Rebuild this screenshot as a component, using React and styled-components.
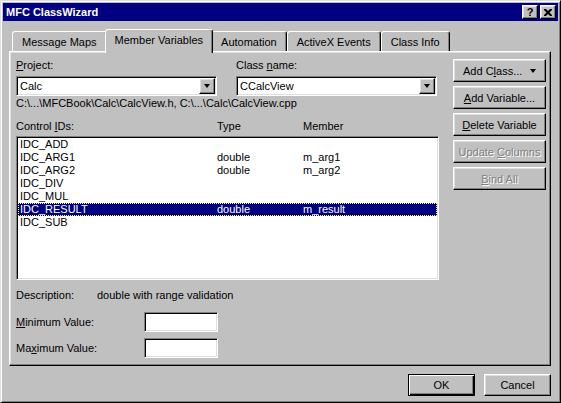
import React from "react";
import styled, { createGlobalStyle, css } from "styled-components";

const GlobalStyle = createGlobalStyle`
  html, body {
    margin: 0;
    padding: 0;
    background: #c0c0c0;
  }
  body {
    font-family: "Liberation Sans", Arial, sans-serif;
    font-size: 11px;
    color: #000;
  }
  * {
    box-sizing: border-box;
  }
`;

const raised = css`
  border: 1px solid;
  border-color: #fff #000 #000 #fff;
  box-shadow: inset -1px -1px #808080, inset 1px 1px #dfdfdf;
`;

const sunken = css`
  border: 1px solid;
  border-color: #808080 #fff #fff #808080;
  box-shadow: inset 1px 1px #000, inset -1px -1px #dfdfdf;
  background: #fff;
`;

const Window = styled.div`
  width: 561px;
  height: 403px;
  padding: 2px;
  display: flex;
  flex-direction: column;
  background: #c0c0c0;
  border: 1px solid;
  border-color: #dfdfdf #000 #000 #dfdfdf;
  box-shadow: inset 1px 1px #fff, inset -1px -1px #808080;
`;

const TitleBar = styled.div`
  height: 18px;
  flex: 0 0 auto;
  display: flex;
  align-items: center;
  padding: 0 2px 0 3px;
  background: #000080;
  color: #fff;
  font-weight: bold;
  > span {
    flex: 1 0 auto;
  }
`;

const TitleButton = styled.div`
  ${raised};
  width: 16px;
  height: 14px;
  margin-left: ${(p) => (p.$gap ? "2px" : "0")};
  background: #c0c0c0;
  color: #000;
  display: flex;
  align-items: center;
  justify-content: center;
  font-size: 11px;
  font-weight: bold;
  line-height: 12px;
`;

const Body = styled.div`
  flex: 1 0 auto;
  display: flex;
  flex-direction: column;
  padding: 8px 7px 4px 6px;
`;

const TabStrip = styled.div`
  height: 22px;
  display: flex;
  align-items: flex-end;
  padding-left: 3px;
`;

const Tab = styled.div`
  height: ${(p) => (p.$active ? "24px" : "20px")};
  margin: ${(p) => (p.$active ? "0 -2px -2px -2px" : "0")};
  position: relative;
  z-index: ${(p) => (p.$active ? 1 : 0)};
  padding: 0 9px;
  display: flex;
  align-items: center;
  padding-bottom: ${(p) => (p.$active ? "3px" : "0")};
  background: #c0c0c0;
  border-top: 1px solid #fff;
  border-left: 1px solid #fff;
  border-right: 1px solid #000;
  border-radius: 3px 3px 0 0;
  box-shadow: inset -1px 0 #808080;
  white-space: nowrap;
`;

const Panel = styled.div`
  flex: 1 0 auto;
  display: flex;
  gap: 14px;
  padding: 7px 4px 0 6px;
  border: 1px solid;
  border-color: #fff #000 #000 #fff;
  box-shadow: inset -1px -1px #808080, inset 1px 1px #dfdfdf;
`;

const LeftColumn = styled.div`
  width: 423px;
  display: flex;
  flex-direction: column;
`;

const FieldRow = styled.div`
  display: grid;
  grid-template-columns: 201px 201px;
  column-gap: 19px;
`;

const Field = styled.div`
  display: flex;
  flex-direction: column;
`;

const Label = styled.div`
  height: 13px;
  line-height: 13px;
  margin-bottom: 4px;
`;

const Key = styled.span`
  text-decoration: underline;
  text-underline-offset: 1px;
`;

const Combo = styled.div`
  ${sunken};
  height: 20px;
  padding: 1px;
  display: flex;
  align-items: center;
  > span {
    flex: 1 0 auto;
    padding-left: 2px;
    line-height: 16px;
  }
`;

const ComboButton = styled.div`
  ${raised};
  width: 16px;
  height: 16px;
  background: #c0c0c0;
  display: flex;
  align-items: center;
  justify-content: center;
`;

const Arrow = styled.span`
  width: 0;
  height: 0;
  border-left: 3.5px solid transparent;
  border-right: 3.5px solid transparent;
  border-top: 4px solid #000;
`;

const PathText = styled.div`
  margin-top: 1px;
  line-height: 13px;
  white-space: nowrap;
`;

const ColumnHeader = styled.div`
  margin-top: 10px;
  line-height: 13px;
  display: grid;
  grid-template-columns: 201px 86px 1fr;
`;

const ListBox = styled.div`
  ${sunken};
  margin-top: 3px;
  height: 144px;
  padding: 1px;
`;

const ListRow = styled.div`
  height: 13px;
  line-height: 13px;
  padding-left: 2px;
  display: grid;
  grid-template-columns: 197px 86px 1fr;
  white-space: nowrap;
  ${(p) =>
    p.$selected &&
    css`
      background: #000080;
      color: #fff;
      outline: 1px dotted #ffff60;
      outline-offset: -1px;
    `}
`;

const DescRow = styled.div`
  margin-top: 9px;
  line-height: 13px;
  display: flex;
  > span:first-child {
    width: 81px;
  }
`;

const ValueRow = styled.div`
  margin-top: ${(p) => p.$top}px;
  display: flex;
  align-items: center;
  > span {
    width: 128px;
  }
`;

const ValueInput = styled.div`
  ${sunken};
  width: 74px;
  height: 20px;
`;

const ButtonColumn = styled.div`
  width: 93px;
  display: flex;
  flex-direction: column;
  gap: 4px;
`;

const Button = styled.div`
  ${raised};
  height: ${(p) => p.$h || 23}px;
  width: ${(p) => (p.$w ? `${p.$w}px` : "auto")};
  background: #c0c0c0;
  display: flex;
  align-items: center;
  justify-content: ${(p) => (p.$menu ? "space-between" : "center")};
  padding: ${(p) => (p.$menu ? "0 9px 0 9px" : "0")};
  white-space: nowrap;
  ${(p) =>
    p.$disabled &&
    css`
      color: #808080;
      text-shadow: 1px 1px #fff;
    `}
  ${(p) =>
    p.$default &&
    css`
      border: 1px solid #000;
      box-shadow: inset 1px 1px #fff, inset -1px -1px #000,
        inset -2px -2px #808080;
    `}
`;

const Footer = styled.div`
  height: 22px;
  margin-top: 8px;
  display: flex;
  justify-content: flex-end;
  gap: 9px;
`;

const rows = [
  { id: "IDC_ADD" },
  { id: "IDC_ARG1", type: "double", member: "m_arg1" },
  { id: "IDC_ARG2", type: "double", member: "m_arg2" },
  { id: "IDC_DIV" },
  { id: "IDC_MUL" },
  { id: "IDC_RESULT", type: "double", member: "m_result", selected: true },
  { id: "IDC_SUB" },
];

const tabs = [
  "Message Maps",
  "Member Variables",
  "Automation",
  "ActiveX Events",
  "Class Info",
];

function CloseGlyph() {
  return (
    <svg width="8" height="7" viewBox="0 0 8 7">
      <path
        d="M0 0h2l2 2 2-2h2v1l-2.5 2.5 2.5 2.5v1h-2l-2-2-2 2h-2v-1l2.5-2.5-2.5-2.5z"
        fill="#000"
      />
    </svg>
  );
}

export default function App() {
  return (
    <>
      <GlobalStyle />
      <Window>
        <TitleBar>
          <span>MFC ClassWizard</span>
          <TitleButton>?</TitleButton>
          <TitleButton $gap>
            <CloseGlyph />
          </TitleButton>
        </TitleBar>
        <Body>
          <TabStrip>
            {tabs.map((t) => (
              <Tab key={t} $active={t === "Member Variables"}>
                {t}
              </Tab>
            ))}
          </TabStrip>
          <Panel>
            <LeftColumn>
              <FieldRow>
                <Field>
                  <Label>
                    <Key>P</Key>roject:
                  </Label>
                  <Combo>
                    <span>Calc</span>
                    <ComboButton>
                      <Arrow />
                    </ComboButton>
                  </Combo>
                </Field>
                <Field>
                  <Label>
                    Class <Key>n</Key>ame:
                  </Label>
                  <Combo>
                    <span>CCalcView</span>
                    <ComboButton>
                      <Arrow />
                    </ComboButton>
                  </Combo>
                </Field>
              </FieldRow>
              <PathText>
                C:\...\MFCBook\Calc\CalcView.h, C:\...\Calc\CalcView.cpp
              </PathText>
              <ColumnHeader>
                <span>
                  Control <Key>I</Key>Ds:
                </span>
                <span>Type</span>
                <span>Member</span>
              </ColumnHeader>
              <ListBox>
                {rows.map((r) => (
                  <ListRow key={r.id} $selected={r.selected}>
                    <span>{r.id}</span>
                    <span>{r.type}</span>
                    <span>{r.member}</span>
                  </ListRow>
                ))}
              </ListBox>
              <DescRow>
                <span>Description:</span>
                <span>double with range validation</span>
              </DescRow>
              <ValueRow $top={10}>
                <span>
                  <Key>M</Key>inimum Value:
                </span>
                <ValueInput />
              </ValueRow>
              <ValueRow $top={6}>
                <span>
                  Ma<Key>x</Key>imum Value:
                </span>
                <ValueInput />
              </ValueRow>
            </LeftColumn>
            <ButtonColumn>
              <Button $menu>
                <span>
                  Add C<Key>l</Key>ass...
                </span>
                <Arrow />
              </Button>
              <Button>
                <span>
                  <Key>A</Key>dd Variable...
                </span>
              </Button>
              <Button>
                <span>
                  <Key>D</Key>elete Variable
                </span>
              </Button>
              <Button $disabled>
                <span>
                  Update <Key>C</Key>olumns
                </span>
              </Button>
              <Button $disabled>
                <span>
                  <Key>B</Key>ind All
                </span>
              </Button>
            </ButtonColumn>
          </Panel>
          <Footer>
            <Button $default $h={22} $w={67}>
              OK
            </Button>
            <Button $h={22} $w={67}>
              Cancel
            </Button>
          </Footer>
        </Body>
      </Window>
    </>
  );
}
